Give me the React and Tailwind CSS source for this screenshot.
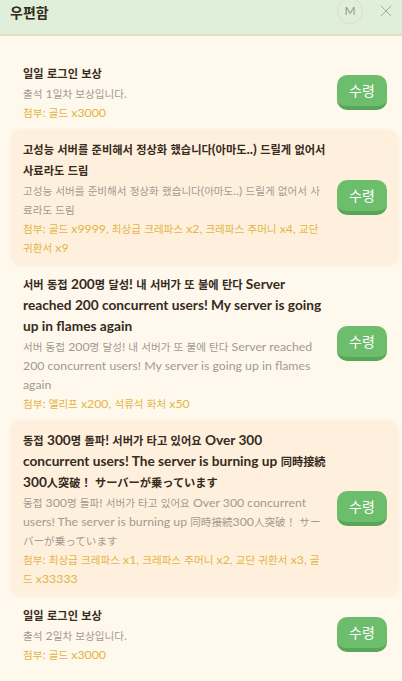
import React from 'react';
import { X } from 'lucide-react';

const mails = [
  {
    id: 1,
    title: '일일 로그인 보상',
    body: '출석 1일차 보상입니다.',
    attach: '골드 x3000',
  },
  {
    id: 2,
    title: '고성능 서버를 준비해서 정상화 했습니다(아마도..) 드릴게 없어서 사료라도 드림',
    body: '고성능 서버를 준비해서 정상화 했습니다(아마도..) 드릴게 없어서 사료라도 드림',
    attach: '골드 x9999, 최상급 크레파스 x2, 크레파스 주머니 x4, 교단 귀환서 x9',
  },
  {
    id: 3,
    title: '서버 동접 200명 달성! 내 서버가 또 불에 탄다 Server reached 200 concurrent users! My server is going up in flames again',
    body: '서버 동접 200명 달성! 내 서버가 또 불에 탄다 Server reached 200 concurrent users! My server is going up in flames again',
    attach: '엘리프 x200, 석류석 화처 x50',
  },
  {
    id: 4,
    title: '동접 300명 돌파! 서버가 타고 있어요 Over 300 concurrent users! The server is burning up 同時接続300人突破！ サーバーが乗っています',
    body: '동접 300명 돌파! 서버가 타고 있어요 Over 300 concurrent users! The server is burning up 同時接続300人突破！ サーバーが乗っています',
    attach: '최상급 크레파스 x1, 크레파스 주머니 x2, 교단 귀환서 x3, 골드 x33333',
  },
  {
    id: 5,
    title: '일일 로그인 보상',
    body: '출석 2일차 보상입니다.',
    attach: '골드 x3000',
  },
];

// CJK glyphs render a bit smaller than the latin text in this UI
const cjk = /([\u3000-\u30ff\u4e00-\u9fff\uac00-\ud7af\uff00-\uffef]+)/;

function Mixed({ text, small }) {
  return text.split(cjk).map((part, i) =>
    i % 2 === 1 ? (
      <span key={i} className={small ? 'text-[0.86em] leading-none' : 'text-[0.82em] leading-none'}>
        {part}
      </span>
    ) : (
      <React.Fragment key={i}>{part}</React.Fragment>
    )
  );
}

export default function App() {
  return (
    <div
      className="w-[402px] h-[681px] overflow-hidden bg-[#fff8ed] flex flex-col"
      style={{ fontFamily: 'Lato, "Noto Sans CJK KR", "Noto Sans CJK JP", sans-serif' }}
    >
      {/* Header */}
      <div className="h-[36px] shrink-0 bg-[#dfefd9] border-b-2 border-[#e9dcbf] flex items-center justify-between pl-[10px] pr-[6px]">
        <h1 className="text-[14px] font-bold text-[#342b1c] -mt-[10px]">우편함</h1>
        <div className="flex items-center gap-[13px] -mt-[12px]">
          <div className="w-[26px] h-[26px] rounded-full border border-[#e6dcc0] flex items-center justify-center text-[12px] text-[#9a968c]">
            M
          </div>
          <X size={20} strokeWidth={1} className="text-[#9a9a92]" />
        </div>
      </div>

      {/* Mail list */}
      <div className="flex flex-col pl-[11px] pr-[4px] pt-[18px]">
        {mails.map((mail, i) => (
          <div
            key={mail.id}
            className={
              'flex items-center gap-[10px] pl-[12px] pr-[11px] py-[8px] rounded-[10px] ' +
              (i % 2 === 1 ? 'bg-[#fff0de] shadow-[0_0_3px_rgba(240,220,190,0.5)]' : '')
            }
          >
            <div className="flex-1 min-w-0">
              <h3 className="text-[13.7px] leading-[21px] font-bold text-[#362b1c]">
                <Mixed text={mail.title} />
              </h3>
              <p className="mt-[1px] text-[12.3px] leading-[19px] text-[#a39a90]">
                <Mixed text={mail.body} small />
              </p>
              <p className="text-[12.3px] leading-[19px] text-[#e2b545]">
                <Mixed text={'첨부: ' + mail.attach} small />
              </p>
            </div>
            <button className="shrink-0 w-[50px] h-[35px] rounded-[10px] bg-[#6dbe6c] border-b-[4px] border-[#58a657] text-white text-[14px] flex items-center justify-center">
              수령
            </button>
          </div>
        ))}
      </div>
    </div>
  );
}
